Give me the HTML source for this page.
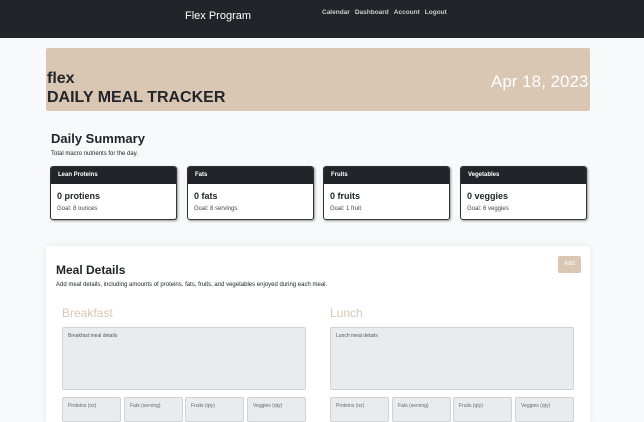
<!DOCTYPE html>
<html style="height:422px;overflow:hidden"><head><meta charset="utf-8"><style>
*{box-sizing:border-box;margin:0;padding:0}
body{width:644px;height:422px;overflow:hidden;background:#f8f9fa;font-family:"Liberation Sans",sans-serif;color:#212529;position:relative}
.abs{position:absolute}
nav{position:absolute;left:0;top:0;width:644px;height:38px;background:#212529}
.brand{left:185px;top:10px;color:#fff;font-size:11px}
.links{left:322px;top:9px;color:#ccc;font-size:6.5px;font-weight:bold}
.links span{margin-right:5px}
.banner{left:46px;top:48px;width:544px;height:63px;background:#d9c7b4;border-radius:2px}
.card{position:absolute;top:166px;width:127px;height:54px;border:1px solid #333;border-radius:3px;background:#fff;box-shadow:1px 1px 2px rgba(0,0,0,.4);overflow:hidden}
.card .h{background:#212529;color:#fff;font-size:6px;font-weight:bold;height:17px;padding:5px 7px}
.card .t{font-size:9px;font-weight:bold;margin:7px 0 0 6px}
.card .g{font-size:6px;color:#444;margin:5px 0 0 6px}
.meal{left:46px;top:246px;width:544px;height:176px;background:#fff;box-shadow:0 0 6px rgba(0,0,0,.08)}
.ta{position:absolute;width:244px;height:63px;top:327px;background:#e9ecef;border:1px solid #cfd3d7;border-radius:2px;font-size:5px;color:#555;padding:5px}
.in{position:absolute;top:397px;width:59px;height:25px;background:#e9ecef;border:1px solid #cfd3d7;border-radius:2px;font-size:5px;color:#666;padding:5px}
.sec{font-size:12px;color:#d9c7b4;top:306px}
</style></head><body>
<nav></nav>
<div class="abs brand">Flex Program</div>
<div class="abs links"><span>Calendar</span><span>Dashboard</span><span>Account</span><span>Logout</span></div>
<div class="abs banner"></div>
<div class="abs" style="left:47px;top:69px;font-size:16px;font-weight:bold;line-height:19px">flex<br>DAILY MEAL TRACKER</div>
<div class="abs" style="left:491px;top:72px;font-size:17px;color:#fff">Apr 18, 2023</div>
<div class="abs" style="left:51px;top:131px;font-size:13px;font-weight:bold">Daily Summary</div>
<div class="abs" style="left:51px;top:151px;font-size:6px">Total macro nutrients for the day.</div>
<div class="card" style="left:50px"><div class="h">Lean Proteins</div><div class="t">0 protiens</div><div class="g">Goal: 8 ounces</div></div>
<div class="card" style="left:187px"><div class="h">Fats</div><div class="t">0 fats</div><div class="g">Goal: 8 servings</div></div>
<div class="card" style="left:323px"><div class="h">Fruits</div><div class="t">0 fruits</div><div class="g">Goal: 1 fruit</div></div>
<div class="card" style="left:460px"><div class="h">Vegetables</div><div class="t">0 veggies</div><div class="g">Goal: 6 veggies</div></div>
<div class="abs meal"></div>
<div class="abs" style="left:558px;top:256px;width:23px;height:17px;background:#d9c7b4;border-radius:2px;color:#fff;font-size:6px;text-align:center;line-height:17px">Add</div>
<div class="abs" style="left:56px;top:263px;font-size:12px;font-weight:bold">Meal Details</div>
<div class="abs" style="left:56px;top:282px;font-size:6px">Add meal details, including amounts of proteins, fats, fruits, and vegetables enjoyed during each meal.</div>
<div class="abs sec" style="left:62px">Breakfast</div>
<div class="abs sec" style="left:330px">Lunch</div>
<div class="ta" style="left:62px">Breakfast meal details</div>
<div class="ta" style="left:330px">Lunch meal details</div>
<div class="in" style="left:62px">Proteins (oz)</div>
<div class="in" style="left:124px">Fats (serving)</div>
<div class="in" style="left:185px">Fruits (qty)</div>
<div class="in" style="left:247px">Veggies (qty)</div>
<div class="in" style="left:330px">Proteins (oz)</div>
<div class="in" style="left:392px">Fats (serving)</div>
<div class="in" style="left:453px">Fruits (qty)</div>
<div class="in" style="left:515px">Veggies (qty)</div>
</body></html>
